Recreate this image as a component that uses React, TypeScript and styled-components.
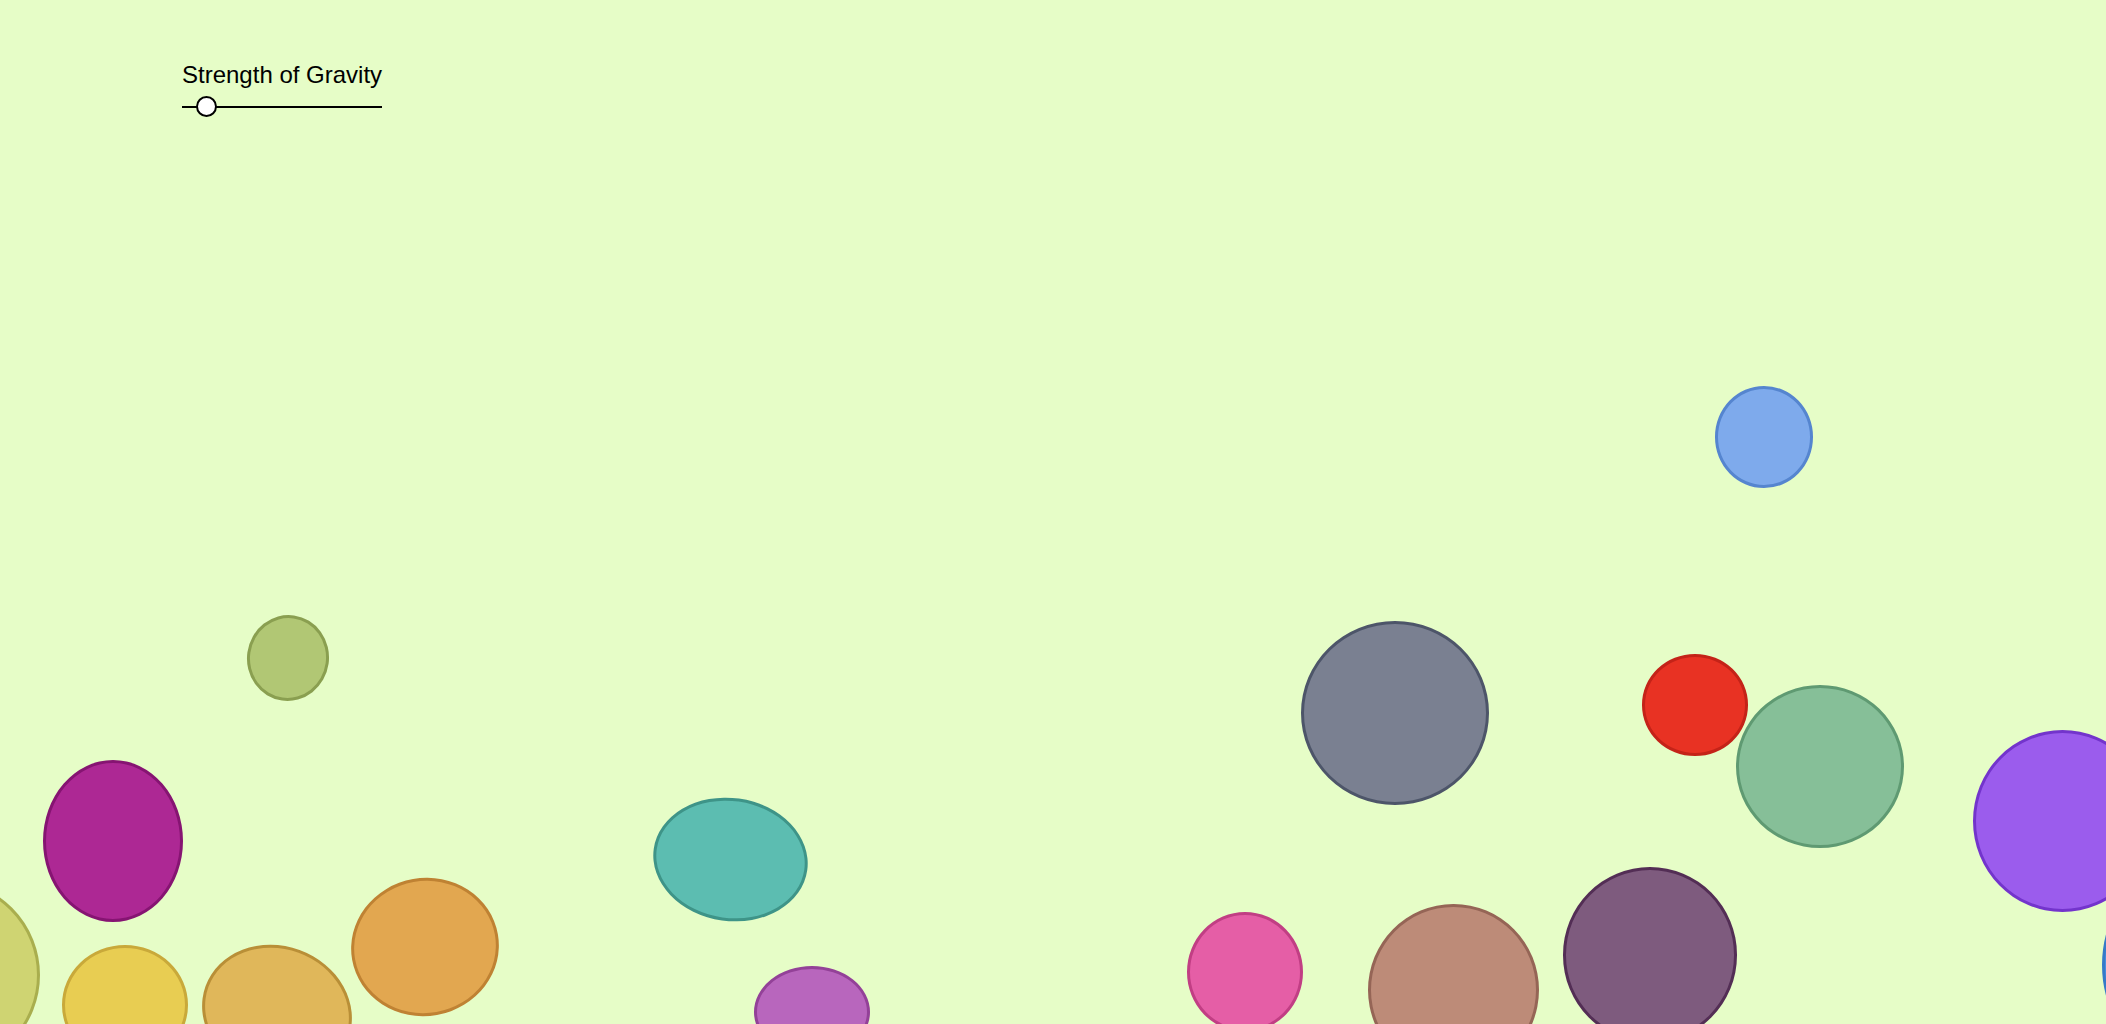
import React, { useState } from "react";
import styled, { createGlobalStyle } from "styled-components";

const GlobalStyle = createGlobalStyle`
  html, body {
    margin: 0;
    padding: 0;
    overflow: hidden;
    background: #e6fdc7;
  }
`;

const Scene = styled.main`
  position: relative;
  width: 100vw;
  height: 100vh;
  overflow: hidden;
  background: #e6fdc7;
  font-family: "Liberation Sans", Arial, Helvetica, sans-serif;
`;

const Controls = styled.div`
  position: absolute;
  left: 182px;
  top: 61px;
  z-index: 2;
  display: flex;
  flex-direction: column;
  align-items: flex-start;
  gap: 7px;
`;

const Label = styled.label`
  display: block;
  font-size: 24px;
  line-height: 28px;
  color: #000;
  white-space: nowrap;
`;

const Range = styled.input`
  -webkit-appearance: none;
  appearance: none;
  display: block;
  width: 200px;
  height: 21px;
  margin: 0;
  padding: 0;
  background: transparent;
  outline: none;

  &::-webkit-slider-runnable-track {
    height: 2px;
    background: #000;
    border: none;
  }

  &::-webkit-slider-thumb {
    -webkit-appearance: none;
    appearance: none;
    width: 21px;
    height: 21px;
    margin-top: -9.5px;
    box-sizing: border-box;
    border-radius: 50%;
    background: #fff;
    border: 2px solid #000;
  }
`;

const Ball = styled.div<{ $fill: string; $stroke: string }>`
  position: absolute;
  box-sizing: border-box;
  border-radius: 50%;
  background: ${(p) => p.$fill};
  border: 3px solid ${(p) => p.$stroke};
`;

type BallData = {
  cx: number;
  cy: number;
  rx: number;
  ry: number;
  rot: number;
  fill: string;
  stroke: string;
};

const balls: BallData[] = [
  { cx: -55, cy: 975, rx: 95, ry: 95, rot: 0, fill: "#cfd472", stroke: "#a9ae4e" },
  { cx: 287.5, cy: 658, rx: 41, ry: 43, rot: 8, fill: "#b1c774", stroke: "#8a9f50" },
  { cx: 113, cy: 841, rx: 70, ry: 81, rot: 0, fill: "#ad2894", stroke: "#861472" },
  { cx: 124.5, cy: 1005, rx: 63, ry: 60, rot: 0, fill: "#e8cd52", stroke: "#c9a93a" },
  { cx: 277, cy: 1012, rx: 76, ry: 66, rot: 20, fill: "#e0b75a", stroke: "#b98f37" },
  { cx: 425, cy: 946.7, rx: 74, ry: 69, rot: -10, fill: "#e2a750", stroke: "#bf8233" },
  { cx: 730, cy: 859, rx: 77.5, ry: 61.5, rot: 8, fill: "#5cbdb1", stroke: "#3e9488" },
  { cx: 811.7, cy: 1012, rx: 58, ry: 46, rot: 0, fill: "#b866bd", stroke: "#934198" },
  { cx: 1244.5, cy: 971.7, rx: 58, ry: 60, rot: 0, fill: "#e55ea6", stroke: "#c13e84" },
  { cx: 1453.7, cy: 990, rx: 85.3, ry: 86, rot: 0, fill: "#bd8b78", stroke: "#956556" },
  { cx: 1650, cy: 955, rx: 87.3, ry: 88, rot: 0, fill: "#7e5b7e", stroke: "#532e55" },
  { cx: 1395, cy: 713, rx: 94, ry: 92, rot: 0, fill: "#7a8091", stroke: "#4d5569" },
  { cx: 1694.7, cy: 705, rx: 53, ry: 50.7, rot: 0, fill: "#e83223", stroke: "#c42318" },
  { cx: 1819.8, cy: 766.7, rx: 84.2, ry: 81.7, rot: 0, fill: "#86bf98", stroke: "#5f9a72" },
  { cx: 1764, cy: 436.7, rx: 49.3, ry: 51, rot: 0, fill: "#7eaaec", stroke: "#5585cf" },
  { cx: 2062, cy: 820.5, rx: 89.5, ry: 91, rot: 0, fill: "#9b5ced", stroke: "#7334cc" },
  { cx: 2222, cy: 965, rx: 120, ry: 120, rot: 0, fill: "#4a90e2", stroke: "#357ac8" },
];

export default function App() {
  const [gravity, setGravity] = useState(8);
  return (
    <>
      <GlobalStyle />
      <Scene>
        <Controls>
          <Label htmlFor="gravity">Strength of Gravity</Label>
          <Range
            id="gravity"
            type="range"
            min={0}
            max={100}
            value={gravity}
            onChange={(e) => setGravity(Number(e.target.value))}
          />
        </Controls>
        {balls.map((b, i) => (
          <Ball
            key={i}
            $fill={b.fill}
            $stroke={b.stroke}
            style={{
              left: b.cx - b.rx,
              top: b.cy - b.ry,
              width: b.rx * 2,
              height: b.ry * 2,
              transform: b.rot ? `rotate(${b.rot}deg)` : undefined,
            }}
          />
        ))}
      </Scene>
    </>
  );
}
